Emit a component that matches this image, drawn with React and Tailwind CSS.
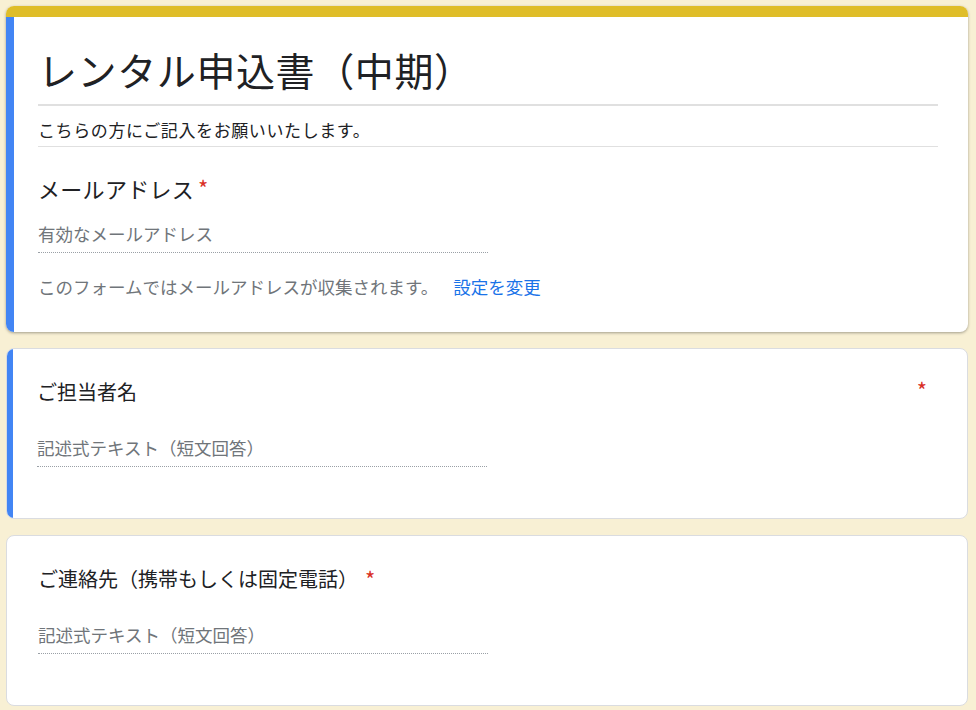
import React from 'react';

const FONT = { fontFamily: '"Noto Sans CJK JP", "Noto Sans", sans-serif' };

function Required({ className = '' }) {
  return <span className={`text-[#d93025] text-[22px] ${className}`}>*</span>;
}

function ShortAnswer({ placeholder, gap = 'mt-[30px]' }) {
  return (
    <div className={`${gap} w-[450px] border-b border-dotted border-[#9aa0a6] pb-[6px]`}>
      <div className="text-[17.5px] leading-[24px] text-[#70757a]">{placeholder}</div>
    </div>
  );
}

export default function App() {
  return (
    <div className="min-h-[710px] bg-[#f8f0d4] pl-[6px] pr-[8px] pt-[6px] pb-[4px]" style={FONT}>
      {/* header card */}
      <div className="rounded-lg bg-white shadow-[0_1px_3px_rgba(0,0,0,0.35)] overflow-hidden">
        <div className="h-[11px] bg-[#dfbd28]" />
        <div className="flex">
          <div className="w-[8px] bg-[#4285f4] shrink-0" />
          <div className="flex-1 pl-[24px] pr-[30px] pt-[28px] pb-[33px]">
            <h1 className="text-[39px] leading-[48px] text-[#202124] tracking-[0.6px]">レンタル申込書（中期）</h1>
            <div className="mt-[11px] h-[2px] bg-[#e0e0e0]" />
            <div className="border-b border-[#e0e0e0] pt-[12px] pb-[4px]">
              <p className="text-[17px] leading-[24px] text-[#202124] tracking-[0.6px]">こちらの方にご記入をお願いいたします。</p>
            </div>
            <div className="mt-[27px] flex items-start text-[22px] leading-[28px] text-[#202124]">
              <span className="tracking-[0.3px]">メールアドレス</span>
              <Required className="ml-[4px] leading-[26px]" />
            </div>
            <ShortAnswer placeholder="有効なメールアドレス" gap="mt-[20px]" />
            <div className="mt-[22px] flex text-[17.5px] leading-[24px]">
              <span className="text-[#70757a]">このフォームではメールアドレスが収集されます。</span>
              <span className="ml-[15px] text-[#1a73e8]">設定を変更</span>
            </div>
          </div>
        </div>
      </div>

      {/* question: name */}
      <div className="mt-[16px] flex rounded-lg bg-white border border-[#dadce0] overflow-hidden">
        <div className="w-[7px] bg-[#4285f4] shrink-0 -ml-px" />
        <div className="flex-1 pl-[24px] pr-[40px] pt-[29px] pb-[51px]">
          <div className="flex justify-between items-start text-[20px] leading-[28px] text-[#202124]">
            <span>ご担当者名</span>
            <Required className="leading-[22px]" />
          </div>
          <ShortAnswer placeholder="記述式テキスト（短文回答）" />
        </div>
      </div>

      {/* question: contact */}
      <div className="mt-[16px] rounded-lg bg-white border border-[#dadce0] pl-[31px] pr-[40px] pt-[29px] pb-[51px]">
        <div className="flex items-start text-[20px] leading-[28px] text-[#202124]">
          <span>ご連絡先（携帯もしくは固定電話）</span>
          <Required className="ml-[7px] leading-[26px]" />
        </div>
        <ShortAnswer placeholder="記述式テキスト（短文回答）" />
      </div>
    </div>
  );
}
